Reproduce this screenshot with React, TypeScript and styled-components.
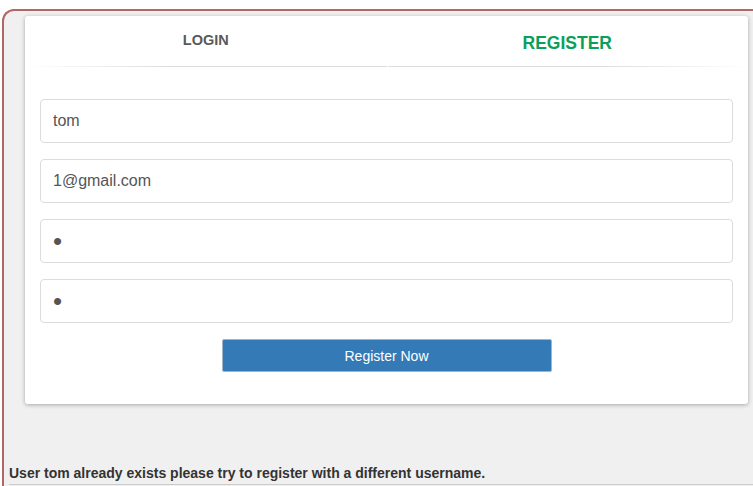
import React, { useState } from "react";
import styled, { createGlobalStyle } from "styled-components";

const GlobalStyle = createGlobalStyle`
    html, body {
        margin: 0;
        padding: 0;
        overflow: hidden;
        background: #ffffff;
        font-family: "Liberation Sans", Arial, sans-serif;
    }
`

const Frame = styled.div`
    box-sizing: border-box;
    width: 751px;
    height: 477px;
    margin: 9px 0 0 2px;
    padding: 5px 0 0 5px;
    border: 2px solid #b36666;
    border-right: none;
    border-bottom: none;
    border-radius: 12px 0 0 0;
    background: #f0f0f0;
    overflow: hidden;
`

const Card = styled.div`
    box-sizing: border-box;
    width: 723px;
    margin-left: 16px;
    background: #ffffff;
    border-radius: 3px;
    box-shadow: 0 1px 4px rgba(0, 0, 0, 0.3);
`

const Tabs = styled.div`
    display: flex;
`

const Tab = styled.div<{ $active?: boolean; $side: "left" | "right" }>`
    position: relative;
    flex: 1;
    height: 51px;
    display: flex;
    align-items: center;
    justify-content: center;
    box-sizing: border-box;
    padding: ${p => p.$active ? "3px 0 0" : "0 0 3px"};
    font-weight: bold;
    font-size: ${p => p.$active ? "17.5px" : "14.5px"};
    color: ${p => p.$active ? "#0aa05c" : "#5a5a5a"};
    cursor: pointer;

    &::after {
        content: "";
        position: absolute;
        bottom: 0;
        height: 1px;
        left: ${p => p.$side === "left" ? "0" : "1px"};
        right: 0;
        background: ${p => p.$side === "left"
            ? "linear-gradient(to right, rgba(221,221,221,0) 0%, #dddddd 40%, #dddddd 100%)"
            : "linear-gradient(to right, #dddddd 0%, #dddddd 60%, rgba(221,221,221,0) 100%)"};
    }
`

const Form = styled.form`
    display: flex;
    flex-direction: column;
    gap: 16px;
    padding: 32px 15px 32px;
`

const Input = styled.input<{ $secret?: boolean }>`
    box-sizing: border-box;
    width: 100%;
    height: 44px;
    padding: 0 12px;
    border: 1px solid #dcdcdc;
    border-radius: 4px;
    font-family: "Liberation Sans", Arial, sans-serif;
    font-size: ${p => p.$secret ? "26px" : "16px"};
    letter-spacing: ${p => p.$secret ? "-2px" : "normal"};
    color: #555555;
    background: #ffffff;
    outline: none;
`

const Button = styled.button`
    align-self: center;
    width: 330px;
    height: 33px;
    border: 1px solid #9fb4c9;
    border-radius: 2px;
    background: #337ab7;
    color: #ffffff;
    font-family: "Liberation Sans", Arial, sans-serif;
    font-size: 14px;
    cursor: pointer;
`

const Message = styled.div`
    margin-top: 61px;
    font-size: 14px;
    line-height: 16px;
    font-weight: bold;
    color: #333333;
`

const Rule = styled.div`
    margin-top: 3px;
    height: 1px;
    background: #cccccc;
`

export default function App() {
    const [username, setUsername] = useState("tom");
    const [email, setEmail] = useState("1@gmail.com");
    const [password, setPassword] = useState("a");
    const [confirm, setConfirm] = useState("a");

    return (
        <>
            <GlobalStyle />
            <Frame>
                <Card>
                    <Tabs>
                        <Tab $side="left">LOGIN</Tab>
                        <Tab $side="right" $active>REGISTER</Tab>
                    </Tabs>
                    <Form onSubmit={(e) => e.preventDefault()}>
                        <Input value={username} onChange={(e) => setUsername(e.target.value)} />
                        <Input value={email} onChange={(e) => setEmail(e.target.value)} />
                        <Input $secret type="password" value={password} onChange={(e) => setPassword(e.target.value)} />
                        <Input $secret type="password" value={confirm} onChange={(e) => setConfirm(e.target.value)} />
                        <Button type="submit">Register Now</Button>
                    </Form>
                </Card>
                <Message>User tom already exists please try to register with a different username.</Message>
                <Rule />
            </Frame>
        </>
    )
}
